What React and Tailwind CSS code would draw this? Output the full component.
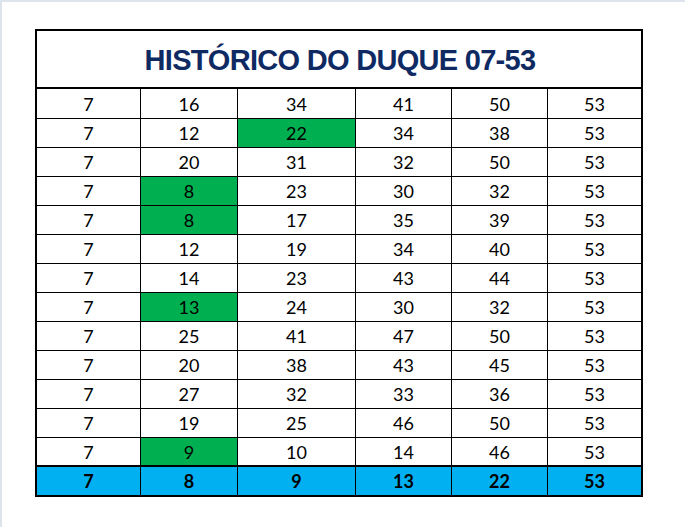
import React from "react";

const rows = [
  [7, 16, 34, 41, 50, 53],
  [7, 12, 22, 34, 38, 53],
  [7, 20, 31, 32, 50, 53],
  [7, 8, 23, 30, 32, 53],
  [7, 8, 17, 35, 39, 53],
  [7, 12, 19, 34, 40, 53],
  [7, 14, 23, 43, 44, 53],
  [7, 13, 24, 30, 32, 53],
  [7, 25, 41, 47, 50, 53],
  [7, 20, 38, 43, 45, 53],
  [7, 27, 32, 33, 36, 53],
  [7, 19, 25, 46, 50, 53],
  [7, 9, 10, 14, 46, 53],
];

const green = {
  "1-2": true,
  "3-1": true,
  "4-1": true,
  "7-1": true,
  "12-1": true,
};

const widths = ["w-[104px]", "w-[97px]", "w-[118px]", "w-[96px]", "w-[96px]", "w-[93px]"];

export default function App() {
  return (
    <div className="w-[685px] h-[527px] bg-white border-t-2 border-l-2 border-[#dde4ec] pt-[27px] pl-[33px]">
      <div className="w-[608px] border-2 border-black" style={{ fontFamily: "Lato, 'Open Sans', sans-serif" }}>
        <div className="h-[58px] border-b-2 border-black flex items-center justify-center">
          <span
            className="text-[29px] font-bold text-[#0f2a62] tracking-[-0.7px] leading-none mt-[2px] ml-[2px]"
            style={{ fontFamily: "'Liberation Sans', Arial, sans-serif" }}
          >
            HISTÓRICO DO DUQUE 07-53
          </span>
        </div>
        {rows.map((r, i) => (
          <div
            key={i}
            className={`flex ${i === 0 ? "h-[30px]" : "h-[29px]"} ${i === rows.length - 1 ? "border-b-2" : "border-b"} border-black`}
          >
            {r.map((v, j) => (
              <div
                key={j}
                className={`${widths[j]} ${j < 5 ? "border-r" : ""} border-black flex items-center justify-center pt-[1px] text-[18px] text-black ${green[`${i}-${j}`] ? "bg-[#00b050]" : ""}`}
              >
                {v}
              </div>
            ))}
          </div>
        ))}
        <div className="flex h-[28px] bg-[#00b0f0]">
          {[7, 8, 9, 13, 22, 53].map((v, j) => (
            <div
              key={j}
              className={`${widths[j]} ${j < 5 ? "border-r" : ""} border-black flex items-center justify-center pt-[1px] text-[18px] font-bold text-black`}
            >
              {v}
            </div>
          ))}
        </div>
      </div>
    </div>
  );
}
